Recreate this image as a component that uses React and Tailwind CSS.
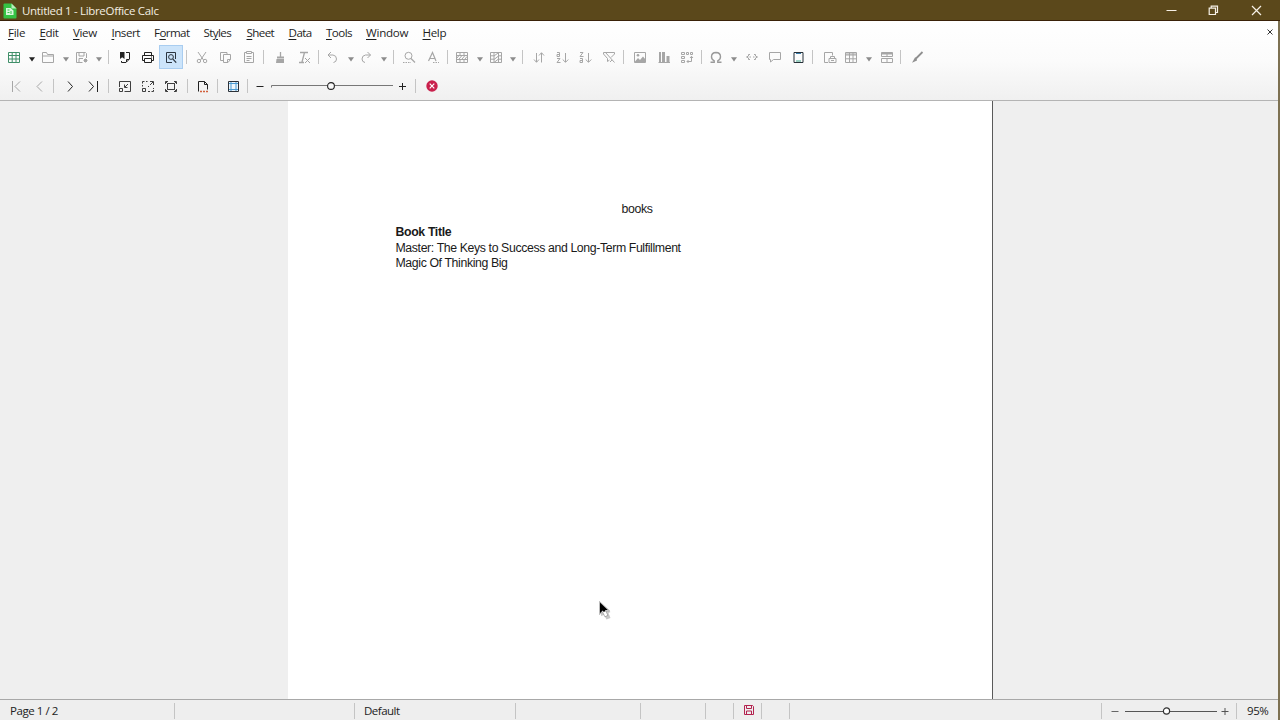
import React from "react";

const Svg = ({ children, c = "text-[#a6a6a6]", m = "" }) => (
  <svg
    viewBox="0 0 16 16"
    className={`size-4 shrink-0 ${c} ${m}`}
    fill="none"
    stroke="currentColor"
    strokeWidth="1"
  >
    {children}
  </svg>
);

const Caret = ({ m, c = "text-[#8c8c8c]" }) => (
  <svg viewBox="0 0 6 16" className={`h-4 w-1.5 shrink-0 ${c} ${m}`}>
    <path d="M0 8.3h6L3 12.4z" fill="currentColor" />
  </svg>
);

const Sep = ({ m, h = "h-3.5" }) => <div className={`w-px shrink-0 bg-[#c4c4c4] ${h} ${m}`} />;

const menus = [
  { a: "", u: "F", b: "ile", w: "w-[31.5px]", t: "tracking-[-0.3px]" },
  { a: "", u: "E", b: "dit", w: "w-[33.5px]", t: "tracking-[-0.4px]" },
  { a: "", u: "V", b: "iew", w: "w-[38.5px]", t: "tracking-[-0.4px]" },
  { a: "", u: "I", b: "nsert", w: "w-[42.5px]", t: "tracking-[-0.5px]" },
  { a: "F", u: "o", b: "rmat", w: "w-[49.5px]", t: "tracking-[-0.6px]" },
  { a: "St", u: "y", b: "les", w: "w-[43px]", t: "tracking-[-0.6px]" },
  { a: "", u: "S", b: "heet", w: "w-[42px]", t: "tracking-[-0.6px]" },
  { a: "", u: "D", b: "ata", w: "w-[37.5px]", t: "tracking-[-0.55px]" },
  { a: "", u: "T", b: "ools", w: "w-10", t: "tracking-[-0.55px]" },
  { a: "", u: "W", b: "indow", w: "w-[56.5px]", t: "tracking-[-0.25px]" },
  { a: "", u: "H", b: "elp", w: "w-10", t: "tracking-[-0.35px]" },
];

function TitleBar() {
  return (
    <div className="flex h-[21px] items-center border-b border-[#3a2209] bg-[#5b481b]">
      <svg viewBox="0 0 14 16" className="mt-px ml-[3px] h-4 w-3.5 shrink-0">
        <path d="M1.5 0.5h7l5 5v9q0 1-1 1h-11q-1 0-1-1v-13q0-1 1-1z" fill="#35c445" />
        <path d="M8.5 0.5l5 5h-5z" fill="#b9efbd" />
        <path d="M3 5h4.5l3 2.500V12H3z" fill="#d9f7dc" />
        <path d="M4.500 7h2M4.500 9.500h2M8 8v3" stroke="#35c445" />
      </svg>
      <span className="mt-[2px] ml-[5px] text-[11.5px] leading-4 tracking-[-0.32px] text-[#f3eee2]">
        Untitled 1 - LibreOffice Calc
      </span>
      <div className="ml-auto flex items-center text-[#f6f0e6]">
        <svg viewBox="0 0 11 11" className="mr-[31px] size-[11px]" stroke="currentColor">
          <path d="M0.5 5.5h10" />
        </svg>
        <svg viewBox="0 0 11 11" className="mr-[32px] size-[11px]" fill="none" stroke="currentColor" strokeWidth="1.2">
          <path d="M1.2 3.2h6.3v6.3H1.2zM3.2 3V1.2h6.3v6.3H7.8" />
        </svg>
        <svg viewBox="0 0 11 11" className="mr-[18px] size-[11px]" stroke="currentColor" strokeWidth="1.2">
          <path d="M1 1l9 9M10 1l-9 9" />
        </svg>
      </div>
    </div>
  );
}

function MenuBar() {
  return (
    <div className="flex h-6 items-center pl-2 text-[11.6px] leading-4 text-[#1e1e1e]">
      {menus.map((m) => (
        <div key={m.u + m.b} className={`shrink-0 whitespace-nowrap ${m.w} ${m.t}`}>
          {m.a}
          <span className="underline decoration-1 underline-offset-2">{m.u}</span>
          {m.b}
        </div>
      ))}
      <svg viewBox="0 0 6 6" className="mr-[5px] mb-0.5 ml-auto size-1.5" stroke="#333">
        <path d="M0.5 0.5l5 5M5.5 0.5l-5 5" />
      </svg>
    </div>
  );
}

function StandardBar() {
  return (
    <div className="flex h-6 items-center">
      <Svg m="ml-1.5" c="text-[#3f8f68]">
        <path d="M2.5 3.5h11v10h-11zM2.5 6.5h11M2.5 10h11M6.2 3.5v10M10 3.5v10" />
      </Svg>
      <Caret m="ml-[7px]" c="text-[#222]" />
      <Svg m="ml-[5px]">
        <path d="M2.5 13.5v-10h4l1 2h6v8zM2.5 7h11" />
      </Svg>
      <Caret m="ml-[7px]" />
      <Svg m="ml-[5px]">
        <path d="M8.5 13.5h-6v-10h9l1 1V9M5 3.5v3.500h5v-3.500M5 13.500v-4h4M11.500 9.500v4M9.500 11.500h4M10 10l3 3M13 10l-3 3" />
      </Svg>
      <Caret m="ml-1.5" />
      <Sep m="ml-1.5" />
      <Svg m="ml-[7px]" c="text-[#222]">
        <path d="M10 3.500h3.500v6.500l-3.500 3.500H5.500V12" />
        <path d="M4 3h4.500v7L6.200 8.300 4 10z" fill="currentColor" stroke="none" />
        <path d="M10.500 13v-2.500H13" />
      </Svg>
      <Svg m="ml-2" c="text-[#222]">
        <path d="M4.500 6V3.500h7V6M4.500 11.500h-2v-5h11v5h-2M4.500 9.500h7v4h-7zM11 8h1" />
      </Svg>
      <div className="ml-[3px] flex h-6 w-6 shrink-0 items-center justify-center border border-[#a9cdf0] bg-[#cce4fa]">
        <Svg c="text-[#2b3540]">
          <path d="M9 13.500H3.500v-10h9V10" />
          <circle cx="8" cy="8" r="2.400" />
          <path d="M9.700 9.900l3.500 3.700" strokeWidth="1.300" />
        </Svg>
      </div>
      <Sep m="ml-[3px]" />
      <Svg m="ml-[7px]">
        <path d="M4 3l5.500 8M12 3l-5.500 8" />
        <circle cx="4.900" cy="12" r="1.700" />
        <circle cx="11.100" cy="12" r="1.700" />
      </Svg>
      <Svg m="ml-2">
        <path d="M5.500 11.500h-3v-8h6.500v2M5.500 5.500h7v5l-2.500 3h-4.500zM9.500 13v-2.500h3" />
      </Svg>
      <Svg m="ml-[7px]">
        <path d="M5.500 3.500h-2v10h9v-10h-2M5.500 2.500h5v2h-5zM5.500 7.500h5M5.500 9.500h5M5.500 11.500h3" />
      </Svg>
      <Sep m="ml-1.5" />
      <Svg m="ml-2">
        <path d="M8.500 3v5" strokeWidth="1.300" />
        <path d="M5 7.500h7v2H5zM4.500 10H12v4H4z" fill="currentColor" stroke="none" />
      </Svg>
      <Svg m="ml-2">
        <path d="M4 3.500h8M8.500 3.500L6 13M3 13.500h5" strokeWidth="1.300" />
        <path d="M9 9l5 5M14 9l-5 5" />
      </Svg>
      <Sep m="ml-1.5" />
      <Svg m="ml-[5px]">
        <path d="M7 3L4 6l3 3M4 6h5q3.500 0.500 3.500 4 0 3-3 3.500" />
      </Svg>
      <Caret m="ml-2" />
      <Svg m="ml-1">
        <path d="M9.500 3l3 3-3 3M12.500 6h-5Q4 6.500 4 10q0 3 3 3.500" />
      </Svg>
      <Caret m="ml-[7px]" />
      <Sep m="ml-1.5" />
      <Svg m="ml-[7px]">
        <circle cx="7.500" cy="6.800" r="3.500" />
        <path d="M10 9.500l4 4" strokeWidth="1.300" />
        <path d="M2 13.500h8" strokeDasharray="1.500 1" />
      </Svg>
      <Svg m="ml-2">
        <path d="M3.500 12L7.500 3.500 11 12M5 9.500h5" strokeWidth="1.200" />
        <path d="M8 13.500h6" strokeDasharray="1.500 1" />
      </Svg>
      <Sep m="ml-1.5" />
      <Svg m="ml-1.5">
        <path d="M2.500 3.500h11v10h-11zM2.500 6.500h11M2.500 10.500h11M6 3.500v3M10 3.500v3M6 10.500v3M10 10.500v3M3 9l2-2.500M5 10l3-3.500M8 10l3-3.500M11 10l2-2.500" />
      </Svg>
      <Caret m="ml-[7px]" />
      <Svg m="ml-[5px]">
        <path d="M2.500 3.500h11v10h-11zM6 3.500v10M10.500 3.500v10M2.500 6.800h3.500M2.500 10.200h3.500M10.500 6.800h3M10.500 10.200h3M6 7l4-3M6 10.500l4.500-3.500M6 13.500l4.500-3.500" />
      </Svg>
      <Caret m="ml-1.5" />
      <Sep m="ml-1.5" />
      <Svg m="ml-2">
        <path d="M5.500 4v9M3 10.500l2.500 2.800L8 10.500M10.500 13.500V4M8 6.500l2.500-2.800L13 6.500" />
      </Svg>
      <Svg m="ml-[7px]">
        <path d="M3 3.500h2.500v4H3v-2h2.500M3 9.500h3l-3 4h3.500M11.500 4v9M8.700 10.500l2.800 2.800 2.800-2.800" />
      </Svg>
      <Svg m="ml-[7px]">
        <path d="M3 3.500h3l-3 4h3.500M3 9.500h2.500v4H3v-2h2.500M11.500 4v9M8.700 10.500l2.800 2.800 2.800-2.800" />
      </Svg>
      <Svg m="ml-2">
        <path d="M2.500 3.500h11v1.500l-3.500 3.500M2.500 3.500v1.500l4 4.500v3l2-1.500M4.500 3.500l9 10M9 13l2-2" />
      </Svg>
      <Sep m="ml-1.5" />
      <Svg m="ml-2">
        <path d="M2.500 3.500h11v10h-11z" />
        <path d="M3 12.500l3-3.500 2 2 3-3.500 2.500 3v2.500H3z" fill="currentColor" stroke="none" />
        <circle cx="6" cy="6.300" r="1.300" fill="currentColor" stroke="none" />
      </Svg>
      <Svg m="ml-2">
        <path d="M2.500 13.500H14" />
        <path d="M3 3h2v10H3zM6 3h3v10H6zM10.500 7h3v6h-3z" fill="currentColor" stroke="none" />
      </Svg>
      <Svg m="ml-[7px]">
        <path d="M2.500 3.500h3v2h-3zM2.500 7.500h3v2h-3zM2.500 11.500h3v2h-3zM7.500 3.500h2v2h-2zM11.500 3.500h2v2h-2z" />
        <path d="M12.500 7.500v5H8M11 9l1.500-1.700L14 9M9.500 11L8 12.500 9.500 14" />
      </Svg>
      <Sep m="ml-1.5" />
      <Svg m="ml-1.5" c="text-[#9a9a9a]">
        <path d="M2.500 13.300h3.700v-1.500Q3.500 10.500 3.500 7.800 3.600 3.600 8 3.500q4.400 0.100 4.500 4.300 0 2.700-2.700 4v1.500h3.700" strokeWidth="1.400" />
      </Svg>
      <Caret m="ml-[7px]" />
      <Svg m="ml-[7px]">
        <path d="M6 5.500H4.500V7L2.500 8l2 1v1.500H6M10 5.500h1.500V7l2 1-2 1v1.500H10M5.500 8H7M9 8h1.500" />
      </Svg>
      <Svg m="ml-[7px]">
        <path d="M2.500 3.500h11v7h-7l-3 2.500v-2.500h-1z" />
      </Svg>
      <Svg m="ml-[7px]" c="text-[#263038]">
        <path d="M4 3.500h9v10H4z" />
        <path d="M6 4.500h5" stroke="#3a7fae" />
        <path d="M6 12h5" stroke="#3fa58a" />
      </Svg>
      <Sep m="ml-1.5" />
      <Svg m="ml-[9px]">
        <path d="M6 13.500H2.500v-10h8v3M7 13.500v-4h7v4zM8.500 9.500v-2h4v2M9 11.500h3" />
      </Svg>
      <Svg m="ml-[5px]">
        <path d="M2.500 3.500h11v10h-11zM2.500 6h11M2.500 9.800h11M6.500 3.500v10M10 3.500v10M2.500 5h11" />
      </Svg>
      <Caret m="ml-[7px]" />
      <Svg m="ml-[7px]">
        <path d="M2.500 4.500h11" strokeWidth="2" />
        <path d="M2.500 3.500h11v4h-11zM2.500 9.500h11v4h-11zM8 5v2.500M8 10v3.500" />
      </Svg>
      <Sep m="ml-[5px]" />
      <Svg m="ml-2" c="text-[#8f8f8f]">
        <path d="M13.500 3L7 9.500" strokeWidth="1.800" />
        <path d="M7.500 8.500L6 8.500 3 13.800l5-2.300z" fill="currentColor" stroke="none" />
      </Svg>
    </div>
  );
}

function PreviewBar() {
  return (
    <div className="mt-[5px] flex h-6 items-center">
      <Svg m="ml-2">
        <path d="M4.500 3v11M12 3.500L7 8.500l5 5" />
      </Svg>
      <Svg m="ml-2">
        <path d="M10 3.500l-5 5 5 5" />
      </Svg>
      <Sep m="ml-[5px]" />
      <Svg m="ml-2" c="text-[#222]">
        <path d="M6 3.500l4.500 5-4.500 5" />
      </Svg>
      <Svg m="ml-[7px]" c="text-[#222]">
        <path d="M4 3.500l4.500 5-4.500 5M12.500 3v11" />
      </Svg>
      <Sep m="ml-[7px]" />
      <Svg m="ml-2" c="text-[#2a2a2a]">
        <path d="M2.500 9V3.500h11v10H7.500M2.500 10.500h3v3h-3zM11 6L8 9M7.500 6.500v3h3" strokeWidth="0.900" />
      </Svg>
      <Svg m="ml-[7px]" c="text-[#2a2a2a]">
        <path d="M2.500 5.500v-2h2M6 3.500h1.500M2.500 7v1.500M13.500 10v1M13.500 12v1.500h-2M8 13.500h2M2.500 10.500h3v3h-3zM8 9l1-1M10 7l3-3M10 3.500h3.500V7" strokeWidth="0.900" />
      </Svg>
      <Svg m="ml-[7px]" c="text-[#2a2a2a]">
        <path d="M4.500 5.500h7v6h-7zM2.500 6V3.500H5M11 3.500h2.500V6M13.500 11v2.500H11M5 13.500H2.500V11M3 4l1.500 1.500M13 4l-1.500 1.500M3 13l1.500-1.500M13 13l-1.500-1.500" strokeWidth="0.900" />
      </Svg>
      <Sep m="ml-2" />
      <Svg m="ml-[7px]" c="text-[#222]">
        <path d="M3.500 13.500v-10h6l3 3V11.500M9.500 3.500v3h3" />
        <path d="M5 13.500h2M8 13.500h2M11 13.500h2" stroke="#d2603c" strokeWidth="1.400" />
      </Svg>
      <Sep m="ml-1.5" />
      <Svg m="ml-[7px]" c="text-[#2b3138]">
        <path d="M3.500 3.500h10v10h-10z" fill="#eef6fc" />
        <path d="M6 4v9M11 4v9M4 5.500h9M4 11.500h9" stroke="#4b9bd3" />
      </Svg>
      <Sep m="ml-1.5" />
      <svg viewBox="0 0 8 8" className="ml-2 size-2 shrink-0" stroke="#222">
        <path d="M0.500 4.500h7" />
      </svg>
      <svg viewBox="0 0 124 12" className="ml-[7px] h-3 w-[124px] shrink-0" fill="none">
        <path d="M0.500 7.500V5.500H122" stroke="#777" />
        <circle cx="60" cy="6" r="3.400" fill="#fafafa" stroke="#222" strokeWidth="1.100" />
      </svg>
      <svg viewBox="0 0 8 8" className="ml-[3px] size-2 shrink-0" stroke="#222">
        <path d="M1 4.500h7M4.500 1v7" />
      </svg>
      <Sep m="ml-[9px]" />
      <svg viewBox="0 0 12 12" className="ml-[10px] size-3 shrink-0">
        <circle cx="6" cy="6" r="5.700" fill="#c9204c" />
        <path d="M3.700 3.700l4.600 4.600M8.300 3.700L3.700 8.300" stroke="#fff" strokeWidth="1.200" />
      </svg>
    </div>
  );
}

function Preview() {
  return (
    <div className="flex min-h-0 flex-1 bg-[#efefef] pl-72">
      <div className="relative w-[705px] border-r border-[#5a5a5a] bg-white pt-[101px] font-['Liberation_Sans',Arial,sans-serif] text-[12.3px] leading-[15.5px] text-[#1a1a1a]">
        <div className="pl-[333.500px] tracking-[-0.35px]">books</div>
        <div className="mt-[7.500px] pl-[107.500px] whitespace-nowrap">
          <div className="font-bold tracking-[-0.35px]">Book Title</div>
          <div className="tracking-[-0.38px]">Master: The Keys to Success and Long-Term Fulfillment</div>
          <div className="tracking-[-0.38px]">Magic Of Thinking Big</div>
        </div>
        <svg viewBox="0 0 16 22" className="absolute top-[499px] left-[310px] h-[22px] w-4">
          <path d="M3 4v12l3-1 2.500 4.500 4-1.500-2-5 2-1z" fill="#000" opacity="0.220" />
          <path d="M1.500 1.500v13l3-2.700 2.400 5 3-1.500-2.300-4.500h4z" fill="#fff" stroke="#777" strokeWidth="0.500" />
          <path d="M2 2.500v10.800L4.800 10.500l0.900 1.500 1.800-1-0.500-1h2.900z" fill="#000" />
        </svg>
      </div>
    </div>
  );
}

function StatusBar() {
  return (
    <div className="flex h-[21px] items-center border-t border-[#a8a8a8] bg-[#eeeeee] pt-px text-[11.5px] leading-4 text-[#222]">
      <div className="w-[174px] shrink-0 pt-px pl-2.5 tracking-[-0.45px]">Page 1 / 2</div>
      <Sep h="h-4" />
      <div className="w-[179px]" />
      <Sep h="h-4" />
      <div className="w-[160px] pt-px pl-[9px] tracking-[-0.5px]">Default</div>
      <Sep h="h-4" />
      <div className="w-[124px]" />
      <Sep h="h-4" />
      <div className="w-16" />
      <Sep h="h-4" />
      <div className="w-[27px]" />
      <Sep h="h-4" />
      <div className="flex w-[27px] justify-center">
        <svg viewBox="0 0 10 10" className="mb-0.5 ml-0.5 size-2.5" fill="none" stroke="#b3224f">
          <path d="M0.500 0.500h8l1 1v8h-9zM2.500 0.500v3h5v-3M2.500 9.500v-3.500h5v3.500" />
        </svg>
      </div>
      <Sep h="h-4" />
      <div className="w-[27px]" />
      <Sep h="h-4" />
      <Sep h="h-4" m="ml-auto" />
      <div className="flex w-[134px] shrink-0 items-center pl-[9px]">
        <svg viewBox="0 0 8 8" className="size-2" stroke="#666">
          <path d="M0.500 4.500h7" />
        </svg>
        <svg viewBox="0 0 92 10" className="ml-1.5 h-2.5 w-[92px]" fill="none">
          <path d="M0 5.500h92" stroke="#555" />
          <circle cx="41.500" cy="5" r="3.100" fill="#fff" stroke="#333" strokeWidth="1.200" />
        </svg>
        <svg viewBox="0 0 8 8" className="ml-1 size-2" stroke="#555">
          <path d="M0.500 4.500h7M4 1v7" />
        </svg>
      </div>
      <Sep h="h-4" />
      <div className="w-[41px] shrink-0 pt-px pl-2.5 tracking-[-0.4px]">95%</div>
    </div>
  );
}

export default function App() {
  return (
    <div className="flex h-[720px] w-[1280px] flex-col overflow-hidden bg-[#efefef] font-['Open_Sans','Noto_Sans',sans-serif]">
      <TitleBar />
      <div className="flex min-h-0 flex-1 flex-col border-r-2 border-[#7d7152]">
        <div className="h-20 shrink-0 border-b border-[#b4b4b4] bg-linear-to-b from-white via-[#fbfbfb] to-[#f0f0f0]">
          <MenuBar />
          <StandardBar />
          <PreviewBar />
        </div>
        <Preview />
        <StatusBar />
      </div>
    </div>
  );
}
